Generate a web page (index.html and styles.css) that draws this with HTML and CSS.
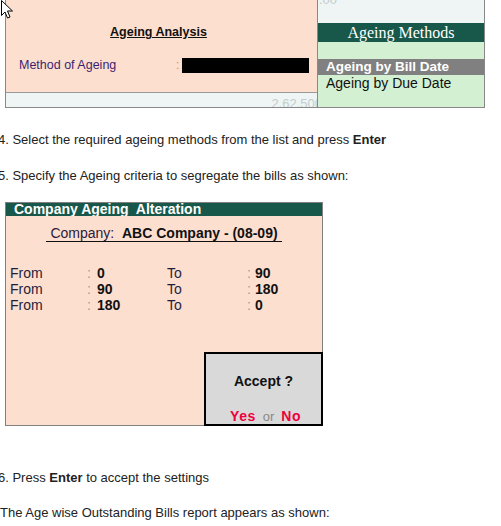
FILE: index.html
```html
<!DOCTYPE html>
<html lang="en">
<head>
    <meta charset="UTF-8">
    <meta name="viewport" content="width=device-width, initial-scale=1.0">
    <title>Age wise Outstanding Bills</title>
    <link rel="stylesheet" href="styles.css">
</head>
<body>
    <!-- Screen: Ageing Analysis with method list -->
    <div class="shot shot-top">
        <div class="pane-left">
            <div class="analysis">
                <div class="analysis-title">Ageing Analysis</div>
                <div class="field">
                    <span class="field-label">Method of Ageing</span>
                    <span class="field-colon">:</span>
                    <span class="field-value"></span>
                </div>
            </div>
            <div class="strip"><span class="ghost ghost-amount">2,62,500</span></div>
        </div>
        <div class="pane-right">
            <div class="ghost-strip"><span class="ghost ghost-top">.00</span></div>
            <div class="menu-title">Ageing Methods</div>
            <ul class="menu">
                <li class="menu-item active">Ageing by Bill Date</li>
                <li class="menu-item">Ageing by Due Date</li>
            </ul>
        </div>
    </div>

    <p class="step step-4">4. Select the required ageing methods from the list and press <b>Enter</b></p>
    <p class="step step-5">5. Specify the Ageing criteria to segregate the bills as shown:</p>

    <!-- Screen: Company Ageing Alteration -->
    <div class="shot shot-ageing">
        <div class="window-title">Company Ageing&nbsp; Alteration</div>
        <div class="window-body">
            <div class="company"><span class="company-label">Company:</span>&nbsp; <b>ABC Company - (08-09)</b></div>
            <div class="periods">
                <span>From</span><span class="colon">:</span><b>0</b><span>To</span><span class="colon">:</span><b>90</b>
                <span>From</span><span class="colon">:</span><b>90</b><span>To</span><span class="colon">:</span><b>180</b>
                <span>From</span><span class="colon">:</span><b>180</b><span>To</span><span class="colon">:</span><b>0</b>
            </div>
            <div class="accept">
                <div class="accept-title">Accept ?</div>
                <div class="accept-choice"><b class="choice">Yes</b><span class="or">or</span><b class="choice">No</b></div>
            </div>
        </div>
    </div>

    <p class="step step-6">6. Press <b>Enter</b> to accept the settings</p>
    <p class="step step-7">The Age wise Outstanding Bills report appears as shown:</p>

    <!-- mouse pointer captured in the screenshot -->
    <svg class="cursor" width="14" height="20" viewBox="0 0 14 20">
        <path d="M1.5 0.5 L1.5 15.5 L5 12 L7.5 18 L10 17 L7.5 11 L12.5 11 Z" fill="#fff" stroke="#000" stroke-width="1"/>
    </svg>
</body>
</html>
```

FILE: styles.css
```css
body {
    margin: 0;
    font-family: "Liberation Sans", Arial, sans-serif;
    font-size: 13px;
    color: #222;
    background: #fff;
}
.shot {
    box-sizing: border-box;
    margin-left: 5px;
    display: flex;
}

/* top screenshot */
.shot-top {
    width: 480px;
    height: 108px;
    border-left: 1px solid #888;
    border-right: 1px solid #888;
    border-bottom: 1px solid #888;
}
.pane-left {
    width: 311px;
    display: flex;
    flex-direction: column;
}
.analysis {
    height: 93px;
    box-sizing: border-box;
    background: #fddfd0;
    border-bottom: 1px solid #999;
    padding-top: 24px;
}
.analysis-title {
    font-size: 12.5px;
    font-weight: bold;
    line-height: 16px;
    text-decoration: underline;
    text-align: center;
    padding-right: 6px;
    color: #111;
}
.field {
    display: flex;
    align-items: center;
    margin-top: 17px;
    height: 16px;
    padding-left: 13px;
}
.field-label {
    width: 157px;
    font-size: 12.5px;
    color: #3b1f6e;
}
.field-colon {
    width: 6px;
    color: #d09a20;
    font-size: 12px;
}
.field-value {
    width: 127px;
    height: 15px;
    background: #000;
}
.strip {
    flex: 1;
    background: #eef5f4;
    overflow: hidden;
    text-align: right;
}
.ghost {
    color: #c3cccc;
    font-size: 13px;
}
.ghost-amount {
    display: inline-block;
    margin-top: 3px;
    margin-right: -5px;
}
.pane-right {
    flex: 1;
    display: flex;
    flex-direction: column;
    border-left: 1px solid #888;
}
.ghost-strip {
    height: 23px;
    background: #eef5f4;
    overflow: hidden;
}
.ghost-top {
    display: block;
    margin-top: -8px;
    padding-left: 1px;
}
.menu-title {
    height: 19px;
    line-height: 19px;
    background: #17584a;
    color: #fff;
    font-family: "Liberation Serif", "Times New Roman", serif;
    font-size: 16px;
    text-align: center;
}
.menu {
    flex: 1;
    margin: 0;
    padding: 17px 0 0;
    list-style: none;
    background: #d3f0d3;
}
.menu-item {
    height: 16px;
    line-height: 16px;
    padding-left: 8px;
    font-size: 14px;
    color: #111;
}
.menu-item.active {
    background: #808080;
    color: #fff;
    font-weight: bold;
    font-size: 13.5px;
}

/* instruction text */
.step {
    margin: 0 0 0 -2px;
    line-height: 16px;
}
.step-4 { margin-top: 24px; }
.step-5 { margin-top: 20px; margin-bottom: 18px; }
.step-6 { margin-top: 44px; }
.step-7 { margin-top: 19px; margin-left: 0; }

/* ageing alteration screenshot */
.shot-ageing {
    width: 318px;
    height: 224px;
    border: 1px solid #808080;
    flex-direction: column;
}
.window-title {
    height: 13px;
    line-height: 13px;
    background: #17584a;
    color: #fff;
    font-size: 14px;
    font-weight: bold;
    padding-left: 8px;
}
.window-body {
    flex: 1;
    display: flex;
    flex-direction: column;
    background: #fddfd0;
    font-size: 14px;
}
.company {
    margin: 9px 0 0 40px;
    width: 236px;
    line-height: 16px;
    text-align: center;
    border-bottom: 1px solid #111;
    color: #111;
}
.company-label {
    color: #2a1a3a;
}
.periods {
    display: grid;
    grid-template-columns: 77px 10px 70px 80px 8px auto;
    grid-auto-rows: 16px;
    margin-top: 23px;
    padding-left: 4px;
    line-height: 16px;
    color: #1e1e3a;
}
.periods b {
    color: #111;
}
.colon {
    color: #a0a0a0;
}
.accept {
    margin-top: auto;
    margin-right: -1px;
    margin-bottom: -1px;
    align-self: flex-end;
    box-sizing: border-box;
    width: 119px;
    height: 74px;
    border: 2px solid #000;
    background: #d9d9d9;
    text-align: center;
}
.accept-title {
    margin-top: 19px;
    line-height: 16px;
    font-weight: bold;
    color: #111;
}
.accept-choice {
    margin-top: 19px;
    line-height: 16px;
    padding-left: 4px;
}
.choice {
    color: #f0003c;
    letter-spacing: 0.5px;
}
.or {
    color: #888;
    font-size: 13px;
    margin: 0 7px;
}

.cursor {
    position: absolute;
    left: 0;
    top: 0;
}
```
